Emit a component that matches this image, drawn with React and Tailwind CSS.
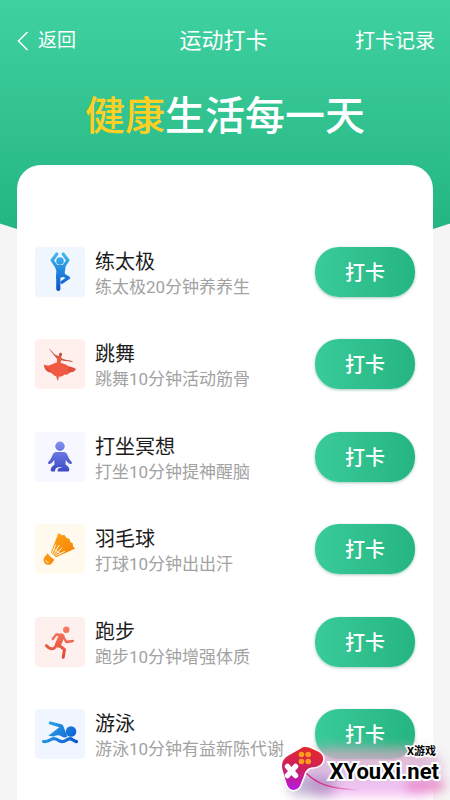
import React from "react";

const BackIcon = () => (
  <svg viewBox="0 0 12 20" className="mr-[9px] ml-[5px] h-5 w-3" aria-hidden="true">
    <path d="M10.500 1L1.500 10l9 9" stroke="currentColor" strokeWidth="1.500" fill="none" />
  </svg>
);

const TaiChiIcon = () => (
  <svg viewBox="0 0 50 50" className="h-full w-full" aria-hidden="true">
    <defs>
      <linearGradient id="taichi" x1="0" y1="5" x2="0" y2="44" gradientUnits="userSpaceOnUse">
        <stop offset="0" stopColor="#45bdf0" />
        <stop offset="0.500" stopColor="#1f86dc" />
        <stop offset="1" stopColor="#0a50cc" />
      </linearGradient>
    </defs>
    <circle cx="25" cy="14" r="3.800" fill="url(#taichi)" />
    <g stroke="url(#taichi)" strokeLinecap="round" strokeLinejoin="round" fill="none">
      <path d="M21.800 7l-4.600 6.300 4.500 6.500" strokeWidth="3.200" />
      <path d="M28.200 7l4.600 6.300-4.500 6.500" strokeWidth="3.200" />
      <path d="M23.300 29v13" strokeWidth="4.200" />
      <path d="M27.500 27.500l6 3.300-6.500 4.500" strokeWidth="3.200" />
    </g>
    <path d="M19.500 18h11c.4 3.500-1 6-.7 8.500l1 3-9.600 2c-.6-2 .2-5 .1-7.500z" fill="url(#taichi)" />
  </svg>
);

const DanceIcon = () => (
  <svg viewBox="0 0 50 50" className="h-full w-full" aria-hidden="true">
    <path
      d="M13.500 9.300c2.200 1.500 3.800 3.300 5.300 5.300 1.100 1.100 2.800 1.900 4.500 2.500l1-.3c-.9-1.300-.2-3 1.300-3.300l1.300.9c.6 1.300.2 2.500-.9 3.100l.4 1.700c1.700.8 3.300 1.500 5.300 1.800 2.500.2 4.800.6 6.800 1.700-2.300.3-4.500.1-6.800-.6-2.300-.1-4.200-.4-5.600-.9l-1.200 2.300z"
      fill="#c4553f"
    />
    <path
      d="M22.300 17.200l3.700 1.800-.3 4.700c3.100.7 5.800 2 8.200 3.800 2.300.3 4.800.9 6.900 2.600-1.200 2.600-3.200 3.300-5.600 3.200-1.600 2-3.600 2.900-5.800 2.200-1.700 1.900-3.800 2.400-5.900 2l-1.200 4.600-1-4.700c-2.100-.5-3.600-1.700-4.700-3.300-2.500-.4-4.800-1.700-6.300-3.800L8.700 25.500c2.300.9 4.300 1.400 6 .8 2.300-1.300 4.600-2.400 7.100-2.900z"
      fill="#f15a42"
    />
    <path d="M8.700 25.500l1.300 4c1.500 2.300 3.500 3.500 6 3.700l-2.400-3.100zM34 27.500c-1.500 1.700-1.600 3.700-.5 5.600 2.800.5 6-.2 7.300-3z" fill="#d9503c" />
    <path d="M22 37.500l1 4.600.9-4.500z" fill="#c96a55" />
  </svg>
);

const MeditateIcon = () => (
  <svg viewBox="0 0 50 50" className="h-full w-full" aria-hidden="true">
    <defs>
      <linearGradient id="meditate" x1="0" y1="9" x2="0" y2="40" gradientUnits="userSpaceOnUse">
        <stop offset="0" stopColor="#8490f0" />
        <stop offset="1" stopColor="#3b49c4" />
      </linearGradient>
    </defs>
    <g fill="url(#meditate)">
      <circle cx="25" cy="14.300" r="4.700" />
      <path d="M21.500 20h7c2.100 0 3 1 3.800 2.800l2 4.300 2.200 2.600c1 1.200.1 2.600-1.300 2.300-2.300-.8-3.500-2.300-4.400-4.200l-.3 4.700c2.500 1.500 4 3.500 3.800 5.400-.2 1.100-1 1.500-2.300 1.500H22.700c-.5-1.900.5-3.200 2.500-3.700l2.500-.7-3.300-.1c-3 .3-4.500 1.800-4.400 4.500h-2.200c-1.300 0-2-.5-2.100-1.500 0-1.900 1.500-3.800 3.800-5.400l-.3-4.700c-.9 1.900-2.200 3.400-4.400 4.200-1.500.3-2.300-1.100-1.300-2.300l2.200-2.600 2-4.300c.8-1.800 1.700-2.800 3.800-2.800z" />
    </g>
  </svg>
);

const BadmintonIcon = () => (
  <svg viewBox="0 0 50 50" className="h-full w-full" aria-hidden="true">
    <defs>
      <linearGradient id="badminton" x1="8" y1="9" x2="40" y2="41" gradientUnits="userSpaceOnUse">
        <stop offset="0" stopColor="#ffac1c" />
        <stop offset="1" stopColor="#f47a00" />
      </linearGradient>
    </defs>
    <g fill="url(#badminton)">
      <path d="M23.500 9l3.300 2.300 2.700-.2 2 3 3 .8.800 3.100 2.600 1.600-.1 2.600 2.400 2.300-2.700 1.200L21 33.300l-5-5z" />
      <path d="M12.700 29.300c1.700 2.700 3.800 4.800 6.800 6.400l-2.600 3.500c-1.700 2-4.700 2.200-6.700.5s-2.200-4.700-.6-6.700z" />
    </g>
    <path
      d="M17.500 28.500l3-7.500M19 29.500l5-8M20 30.500l7-6.500M21 31.500l8.500-4M19.500 25.500l6 4.500"
      stroke="#fffaf0"
      strokeWidth="1"
      strokeLinecap="round"
      fill="none"
    />
    <path d="M11 36.500c.1 1.200.9 1.900 2.200 1.900" stroke="#ffe2ab" strokeWidth="1.100" strokeLinecap="round" fill="none" />
  </svg>
);

const RunIcon = () => (
  <svg viewBox="0 0 50 50" className="h-full w-full" aria-hidden="true">
    <defs>
      <linearGradient id="run" x1="0" y1="0" x2="0" y2="50" gradientUnits="userSpaceOnUse">
        <stop offset="0.200" stopColor="#fb7b62" />
        <stop offset="0.800" stopColor="#e04a33" />
      </linearGradient>
    </defs>
    <circle cx="31.300" cy="12.800" r="3.200" fill="url(#run)" />
    <g stroke="url(#run)" strokeLinecap="round" strokeLinejoin="round" fill="none">
      <path d="M17.700 22l3.500-4.500 6 .3" strokeWidth="2.300" />
      <path d="M27.500 18.500l3.800 6.500 6.500-1" strokeWidth="2.400" />
      <path d="M26.500 19.500l-3.500 8" strokeWidth="6" />
      <path d="M22.500 27l-3.500 4.300c-2.300 1-5 .3-7.700-2.800" strokeWidth="2.800" />
      <path d="M23.500 28l6 4.500-1.300 7.800" strokeWidth="3" />
    </g>
  </svg>
);

const SwimIcon = () => (
  <svg viewBox="0 0 50 50" className="h-full w-full" aria-hidden="true">
    <defs>
      <linearGradient id="swim" x1="6" y1="10" x2="44" y2="36" gradientUnits="userSpaceOnUse">
        <stop offset="0" stopColor="#35b6ea" />
        <stop offset="1" stopColor="#0650cf" />
      </linearGradient>
    </defs>
    <circle cx="36" cy="22.500" r="5.300" fill="url(#swim)" />
    <path
      d="M15.600 12.500l10.700 2.700c1 .3 1.600.9 2 1.800l4 10.500c-1.900 1.300-3.500 1.300-5.500 0-2.600-1.700-5.200-1.800-8-.1l-5.500-.7 11-8.500-9.300-2.600c-2-.8-1.400-3.500.6-3.100z"
      fill="url(#swim)"
    />
    <path
      d="M8.500 32.500c3.300.5 5.300-.5 7.500-2 2.300-1.500 4.300-1.300 6.500.3 3.300 2.500 5.800 2.700 9 .2 2.300-1.700 4-1.800 6.200-.3 1.300 1 2.400 1.700 3.800 1.900"
      stroke="url(#swim)"
      strokeWidth="3.200"
      strokeLinecap="round"
      fill="none"
    />
  </svg>
);

const sports = [
  { id: 1, name: "练太极", desc: "练太极20分钟养养生", tile: "bg-[#f0f6fe]", icon: <TaiChiIcon /> },
  { id: 2, name: "跳舞", desc: "跳舞10分钟活动筋骨", tile: "bg-[#fff0ee]", icon: <DanceIcon /> },
  { id: 3, name: "打坐冥想", desc: "打坐10分钟提神醒脑", tile: "bg-[#f7f7ff]", icon: <MeditateIcon /> },
  { id: 4, name: "羽毛球", desc: "打球10分钟出出汗", tile: "bg-[#fff9ee]", icon: <BadmintonIcon /> },
  { id: 5, name: "跑步", desc: "跑步10分钟增强体质", tile: "bg-[#fff0f0]", icon: <RunIcon /> },
  { id: 6, name: "游泳", desc: "游泳10分钟有益新陈代谢", tile: "bg-[#f0f5ff]", icon: <SwimIcon /> },
];

const SportRow = ({ sport }) => (
  <li className="flex items-center">
    <div className={`h-[50px] w-[50px] shrink-0 overflow-hidden rounded ${sport.tile}`}>{sport.icon}</div>
    <div className="ml-[10px] flex-1 pt-1 whitespace-nowrap">
      <h2 className="text-[20px] leading-[22px] text-[#1c1c1c]">{sport.name}</h2>
      <p className="mt-1 text-[17px] leading-5 text-[#a2a2a2]">{sport.desc}</p>
    </div>
    <button
      type="button"
      className="h-[50px] w-[100px] shrink-0 rounded-3xl bg-linear-to-r from-[#3acb9b] to-[#24b581] pt-[2px] text-[20px] font-medium text-white shadow-[0_1px_3px_rgba(36,120,90,0.4)]"
    >
      打卡
    </button>
  </li>
);

const SiteBadge = () => (
  <div className="absolute right-0 bottom-0 h-[60px] w-[180px]">
    <div className="absolute right-2 bottom-1 h-12 w-[140px] rounded-3xl bg-linear-to-b from-[#d9a3b4]/80 via-[#d8b4e4]/80 to-[#f7aef0]/80 blur-[6px]"></div>
    <div className="absolute bottom-1 left-[18px] h-5 w-12 rounded-full bg-[#6d5a94]/40 blur-[6px]"></div>
    <div className="absolute right-1 bottom-2 h-3 w-10 rounded-full bg-[#e0489c]/40 blur-[5px]"></div>
    <svg viewBox="0 0 180 60" className="absolute inset-0 h-full w-full" aria-hidden="true">
      <defs>
        <linearGradient id="pad" x1="30" y1="6" x2="24" y2="52" gradientUnits="userSpaceOnUse">
          <stop offset="0" stopColor="#e52a2a" />
          <stop offset="0.500" stopColor="#cc1f62" />
          <stop offset="1" stopColor="#b41af0" />
        </linearGradient>
        <linearGradient id="cable" x1="36" y1="0" x2="90" y2="0" gradientUnits="userSpaceOnUse">
          <stop offset="0.400" stopColor="#d9308a" />
          <stop offset="1" stopColor="#d9308a" stopOpacity="0" />
        </linearGradient>
      </defs>
      <path d="M36 33c10 10 22 16 54 17" stroke="url(#cable)" strokeWidth="1.500" fill="none" />
      <path
        d="M30 9c2-2.500 6-2.500 9-1.500l8 3.500c6 2.500 8 8 4.500 12.500-3 3.500-7 3.500-10.500 4-4 1-6 4-7 8l-3.500 9c-1.500 4-5.500 6.500-9 5-3.500-1.300-4.500-4.500-5.500-8l-3.500-12c-1.500-6 .5-11 6-14z"
        fill="url(#pad)"
        stroke="#fff"
        strokeWidth="3"
        paintOrder="stroke"
      />
      <g fill="#ff9d1c">
        <circle cx="31.500" cy="14.500" r="2.800" />
        <circle cx="38.200" cy="14.500" r="2.800" />
        <circle cx="31.500" cy="21.500" r="2.800" />
        <circle cx="38.200" cy="21.500" r="2.800" />
      </g>
      <path d="M17.500 26.500l8 9M25.500 26.500l-8 9" stroke="#fff" strokeWidth="5.500" strokeLinecap="round" />
    </svg>
    <div className="absolute right-[11px] bottom-4 flex flex-col items-end gap-[2px] font-bold text-black [paint-order:stroke_fill]">
      <span className="pr-[3px] text-[11px] leading-3 [-webkit-text-stroke:3px_#fff]">X游戏</span>
      <span className="text-[22px] leading-6 [-webkit-text-stroke:4px_#fff]">XYouXi.net</span>
    </div>
  </div>
);

const App = () => {
  return (
    <div className="relative flex min-h-screen flex-col overflow-hidden bg-[#f5f5f5] font-[Roboto,'Noto_Sans_CJK_SC',sans-serif]">
      {/* curved green backdrop */}
      <div className="absolute -inset-x-[20%] top-0 h-64 bg-linear-to-b from-[#3fd1a0] to-[#1fb27e] [border-radius:0_0_50%_50%/0_0_108px_108px]"></div>

      <header className="relative grid grid-cols-3 items-center pt-[25px] pr-[15px] pl-3 text-white">
        <a href="#back" className="flex items-center text-[19px] leading-8">
          <BackIcon />
          返回
        </a>
        <h1 className="text-center text-[22px] leading-8">运动打卡</h1>
        <a href="#records" className="text-right text-[20px] leading-8">
          打卡记录
        </a>
      </header>

      <p className="relative mt-8 text-center text-[40px] leading-[56px] font-medium text-white">
        <span className="text-[#fdd023]">健康</span>生活每一天
      </p>

      <main className="relative mx-[17px] mt-5 flex flex-1 flex-col rounded-t-3xl bg-white px-[18px] pt-[82px] pb-[41px]">
        <ul className="flex flex-1 flex-col justify-between gap-6">
          {sports.map((sport) => (
            <SportRow key={sport.id} sport={sport} />
          ))}
        </ul>
      </main>

      <SiteBadge />
    </div>
  );
};

export default App;
